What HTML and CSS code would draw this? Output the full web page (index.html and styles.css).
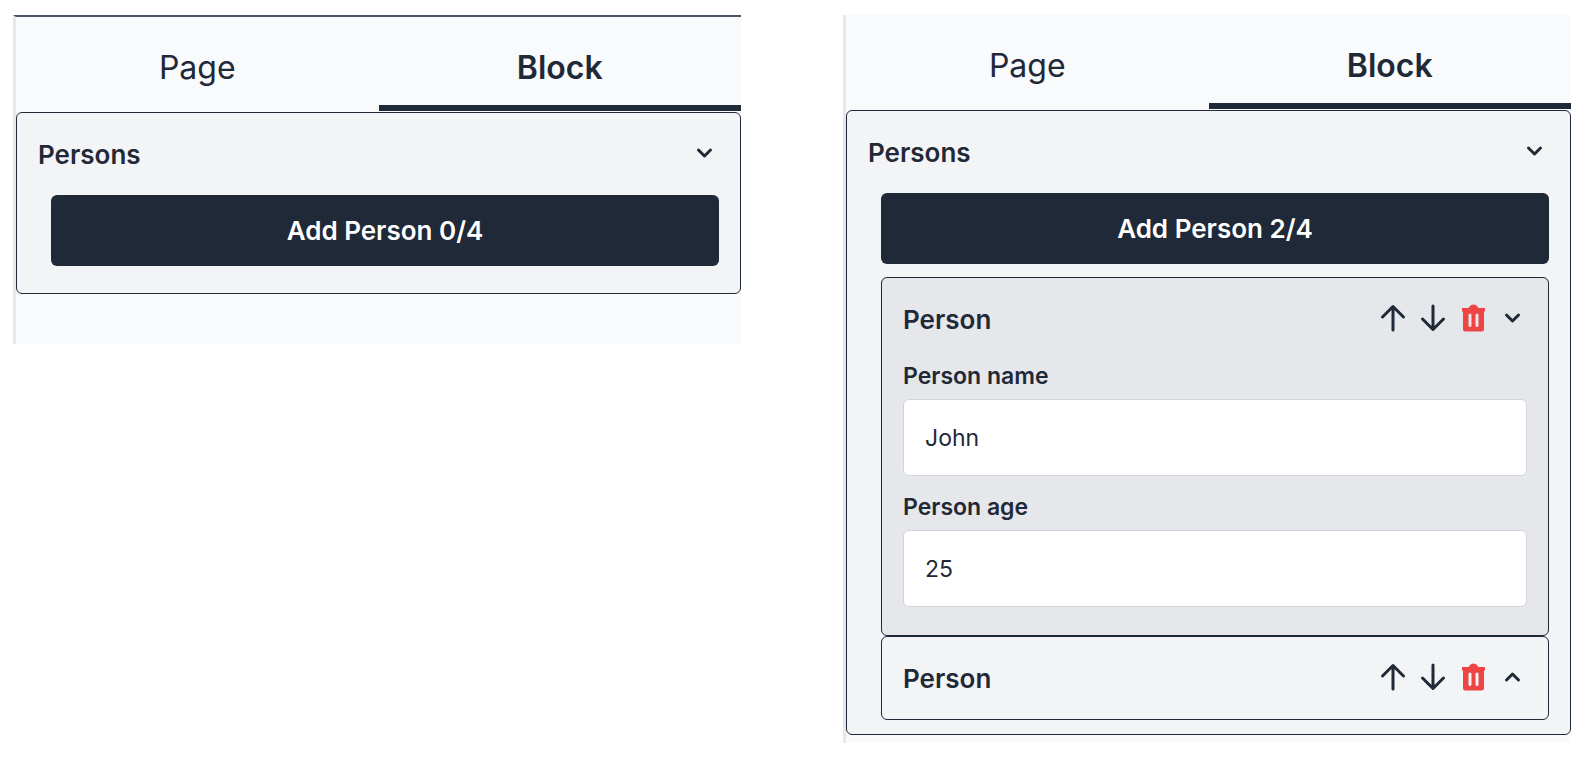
FILE: index.html
```html
<!DOCTYPE html>
<html lang="en">
<head>
    <meta charset="UTF-8">
    <title>Block editor</title>
    <link rel="stylesheet" href="styles.css">
</head>
<body>
<svg class="sprite" aria-hidden="true">
    <symbol id="icon-up" viewBox="0 0 28 28">
        <path d="M14 26V2.500M3.500 13L14 2.500L24.500 13"/>
    </symbol>
    <symbol id="icon-down" viewBox="0 0 28 28">
        <path d="M14 2V25.500M3.500 15L14 25.500L24.500 15"/>
    </symbol>
    <symbol id="icon-trash" viewBox="0 0 28 28">
        <path fill-rule="evenodd" d="M3 4H9.500L11 2Q12 0.500 14.500 0.500T18 2L19.500 4H26V7.500H25V25Q25 27.500 22.500 27.500H6.500Q4 27.500 4 25V7.500H3ZM11 9.500Q9.500 9.500 9.500 11V21.500Q9.500 23 11 23T12.500 21.500V11Q12.500 9.500 11 9.500ZM18 9.500Q16.500 9.500 16.500 11V21.500Q16.500 23 18 23T19.500 21.500V11Q19.500 9.500 18 9.500Z"/>
    </symbol>
    <symbol id="icon-chevron-down" viewBox="0 0 28 28">
        <path d="M7.500 11L13.500 17L19.500 11"/>
    </symbol>
    <symbol id="icon-chevron-up" viewBox="0 0 28 28">
        <path d="M7.500 17L13.500 11L19.500 17"/>
    </symbol>
</svg>

<main class="panels">
    <section class="panel panel-empty">
        <nav class="tabs">
            <button class="tab">Page</button>
            <button class="tab active">Block</button>
        </nav>
        <div class="card">
            <div class="card-header">
                <h2>Persons</h2>
                <button class="icon-button" aria-label="Collapse"><svg class="icon icon-chevron"><use href="#icon-chevron-down"/></svg></button>
            </div>
            <div class="list">
                <button class="add-button">Add Person 0/4</button>
            </div>
        </div>
    </section>

    <section class="panel">
        <nav class="tabs">
            <button class="tab">Page</button>
            <button class="tab active">Block</button>
        </nav>
        <div class="card">
            <div class="card-header">
                <h2>Persons</h2>
                <button class="icon-button" aria-label="Collapse"><svg class="icon icon-chevron"><use href="#icon-chevron-down"/></svg></button>
            </div>
            <div class="list">
                <button class="add-button">Add Person 2/4</button>
                <div class="card card-open">
                    <div class="card-header">
                        <h3>Person</h3>
                        <div class="actions">
                            <button class="icon-button" aria-label="Move up"><svg class="icon"><use href="#icon-up"/></svg></button>
                            <button class="icon-button" aria-label="Move down"><svg class="icon"><use href="#icon-down"/></svg></button>
                            <button class="icon-button" aria-label="Delete"><svg class="icon icon-trash"><use href="#icon-trash"/></svg></button>
                            <button class="icon-button" aria-label="Collapse"><svg class="icon icon-chevron"><use href="#icon-chevron-down"/></svg></button>
                        </div>
                    </div>
                    <div class="fields">
                        <div class="form-group">
                            <label for="name">Person name</label>
                            <input type="text" id="name" value="John">
                        </div>
                        <div class="form-group">
                            <label for="age">Person age</label>
                            <input type="text" id="age" value="25">
                        </div>
                    </div>
                </div>
                <div class="card">
                    <div class="card-header">
                        <h3>Person</h3>
                        <div class="actions">
                            <button class="icon-button" aria-label="Move up"><svg class="icon"><use href="#icon-up"/></svg></button>
                            <button class="icon-button" aria-label="Move down"><svg class="icon"><use href="#icon-down"/></svg></button>
                            <button class="icon-button" aria-label="Delete"><svg class="icon icon-trash"><use href="#icon-trash"/></svg></button>
                            <button class="icon-button" aria-label="Expand"><svg class="icon icon-chevron"><use href="#icon-chevron-up"/></svg></button>
                        </div>
                    </div>
                </div>
            </div>
        </div>
    </section>
</main>
</body>
</html>
```
FILE: styles.css
```css
:root {
    --dark: #1f2937;
    --panel: #f9fafb;
    --card: #f3f4f6;
    --card-open: #e5e7eb;
    --input-border: #d1d5db;
    --danger: #ef4444;
}

* {
    box-sizing: border-box;
}

body {
    margin: 0;
    padding: 15px 17px 15px 13px;
    background-color: white;
    color: var(--dark);
    font-family: Inter, sans-serif;
}

button {
    padding: 0;
    border: none;
    background: none;
    color: inherit;
    font-family: inherit;
    cursor: pointer;
}

.sprite {
    display: none;
}

.panels {
    display: grid;
    grid-template-columns: 1fr 1fr;
    gap: 102px;
    align-items: start;
}

.panel {
    padding-bottom: 8px;
    border-left: 3px solid var(--card-open);
    background-color: var(--panel);
}

.panel-empty {
    padding-bottom: 50px;
    border-top: 2px solid #4b5563;
}

.tabs {
    display: flex;
    padding-bottom: 1px;
}

.tab {
    flex: 1;
    padding: 27px 0 13px;
    border-bottom: 6px solid transparent;
    font-size: 32px;
    line-height: 48px;
}

.tab.active {
    border-bottom-color: var(--dark);
    font-weight: 600;
}

.card {
    border: 1px solid var(--dark);
    border-radius: 6px;
    background-color: var(--card);
}

.card-open {
    background-color: var(--card-open);
}

.card-header {
    display: flex;
    align-items: center;
    justify-content: space-between;
    height: 82px;
    padding: 2px 21px 0;
}

h2, h3 {
    margin: 0;
    font-size: 26px;
    font-weight: 600;
    line-height: 32px;
}

.list {
    padding: 0 21px 14px 34px;
}

.add-button {
    display: block;
    width: 100%;
    height: 71px;
    margin-bottom: 13px;
    border-radius: 6px;
    background-color: var(--dark);
    color: white;
    font-size: 26px;
    font-weight: 600;
}

.actions {
    display: flex;
    gap: 12px;
}

.icon {
    display: block;
    width: 28px;
    height: 28px;
    margin-bottom: 4px;
    fill: none;
    stroke: var(--dark);
    stroke-width: 3;
    stroke-linecap: round;
    stroke-linejoin: round;
}

.icon-trash {
    fill: var(--danger);
    stroke: none;
}

.fields {
    display: grid;
    gap: 15px;
    padding: 0 21px 28px;
}

label {
    display: block;
    margin-bottom: 7px;
    font-size: 23px;
    font-weight: 600;
    line-height: 32px;
}

input {
    display: block;
    width: 100%;
    height: 77px;
    padding: 0 21px;
    border: 1px solid var(--input-border);
    border-radius: 6px;
    background-color: white;
    color: var(--dark);
    font-family: inherit;
    font-size: 23px;
}
```
